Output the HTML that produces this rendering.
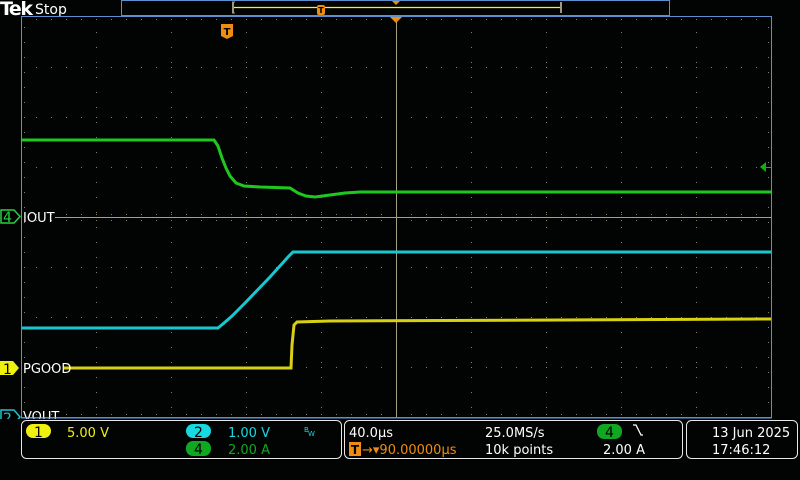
<!DOCTYPE html>
<html><head><meta charset="utf-8"><style>
html,body{margin:0;padding:0;background:#000;width:800px;height:480px;overflow:hidden}
svg{display:block}
text{font-family:"DejaVu Sans","Liberation Sans",sans-serif}
</style></head><body>
<svg width="800" height="480" viewBox="0 0 800 480" xmlns="http://www.w3.org/2000/svg">
<rect width="800" height="480" fill="#020403"/>
<text x="0" y="15" font-family="Liberation Serif,serif" font-weight="bold" font-size="19" fill="#fff" letter-spacing="-1.5">Tek</text>
<text x="35" y="14" font-size="14" fill="#fff">Stop</text>
<rect x="121.5" y="0.5" width="548" height="15" fill="none" stroke="#5b8fd0" stroke-width="1"/>
<line x1="233" y1="7.5" x2="561" y2="7.5" stroke="#ffef20" stroke-width="1.2"/>
<path d="M233 2v11M561 2v11" stroke="#a09880" stroke-width="2"/>
<path d="M232 2h3M232 13h3" stroke="#a09880"/>
<rect x="317" y="5" width="8" height="10" rx="2" fill="#f08c10"/>
<text x="321" y="13" font-size="8" fill="#000" text-anchor="middle" font-weight="bold">T</text>
<path d="M392 1h8l-4 4z" fill="#f08c10"/>
<g stroke="#8a8070" stroke-width="1" stroke-dasharray="1 14">
<line x1="96.5" y1="32" x2="96.5" y2="417"/><line x1="171.5" y1="32" x2="171.5" y2="417"/>
<line x1="246.5" y1="32" x2="246.5" y2="417"/><line x1="321.5" y1="32" x2="321.5" y2="417"/>
<line x1="471.5" y1="32" x2="471.5" y2="417"/><line x1="546.5" y1="32" x2="546.5" y2="417"/>
<line x1="621.5" y1="32" x2="621.5" y2="417"/><line x1="696.5" y1="32" x2="696.5" y2="417"/>
<line x1="36" y1="67.5" x2="771" y2="67.5"/><line x1="36" y1="117.5" x2="771" y2="117.5"/>
<line x1="36" y1="167.5" x2="771" y2="167.5"/><line x1="36" y1="267.5" x2="771" y2="267.5"/>
<line x1="36" y1="317.5" x2="771" y2="317.5"/><line x1="36" y1="367.5" x2="771" y2="367.5"/>
<line x1="36" y1="19.5" x2="771" y2="19.5"/><line x1="36" y1="414.5" x2="771" y2="414.5"/>
<line x1="24.5" y1="27" x2="24.5" y2="417"/><line x1="768.5" y1="27" x2="768.5" y2="417"/>
<line x1="36" y1="214.5" x2="771" y2="214.5"/><line x1="36" y1="220.5" x2="771" y2="220.5"/>
</g>
<line x1="55" y1="217.5" x2="771" y2="217.5" stroke="#a89e80" stroke-width="1"/>
<line x1="396.5" y1="17" x2="396.5" y2="417" stroke="#a89e80" stroke-width="1"/>
<path d="M21.5 17V418M21 16.5H771.5V418M21 417.5H772" fill="none" stroke="#5b8fd0" stroke-width="1"/>
<path d="M390 17h12l-6 6z" fill="#f08c10"/>
<path d="M221 24h12v12l-6 3l-6-3z" fill="#f08c10"/>
<text x="227" y="35" font-size="10" font-weight="bold" fill="#000" text-anchor="middle">T</text>
<path d="M760 167l6-5v10z" fill="#10b010"/><line x1="765" y1="167.5" x2="771" y2="167.5" stroke="#10b010"/>
<polyline fill="none" stroke="#1ec81e" stroke-width="3" points="22,140 214,140 218,146 222,158 226,168 230,176 236,183 244,186 260,187 290,188 298,193 306,196 315,197 330,195 345,193 360,192 771,192"/>
<polyline fill="none" stroke="#18c8d0" stroke-width="3" points="22,328 218,328 224,323 232,316 245,303 270,277 288,257 293,252 771,252"/>
<polyline fill="none" stroke="#d8d010" stroke-width="3" points="64,368 291,368 292,345 294,325 297,322 330,321 771,319"/>
<path d="M1 210h13l6 6.5l-6 6.5h-13z" fill="#000" stroke="#2ad040" stroke-width="1.5"/>
<text x="3" y="222" font-size="14" fill="#2ad040">4</text>
<text x="23" y="222" font-size="13" fill="#fff">IOUT</text>
<path d="M0 361h13l6 7l-6 7h-13z" fill="#f0f010"/>
<text x="3" y="374" font-size="14" fill="#000">1</text>
<text x="23" y="373" font-size="13" fill="#fff">PGOOD</text>
<path d="M1 410h13l6 7l-6 7h-13z" fill="#000" stroke="#18c8d0" stroke-width="1.5"/>
<text x="3" y="423" font-size="14" fill="#18c8d0">2</text>
<text x="23" y="421" font-size="13" fill="#fff">VOUT</text>
<rect x="0" y="419" width="800" height="61" fill="#020403"/>
<line x1="21" y1="418" x2="772" y2="418" stroke="#5b8fd0"/>
<rect x="21.5" y="420.5" width="320" height="38" rx="5" fill="none" stroke="#e8e8e8"/>
<rect x="344.5" y="420.5" width="338" height="38" rx="5" fill="none" stroke="#e8e8e8"/>
<rect x="686.5" y="420.5" width="111" height="38" rx="5" fill="none" stroke="#e8e8e8"/>
<rect x="26" y="424" width="25" height="14" rx="7" fill="#f0f010"/>
<text x="38.5" y="437" font-size="14" fill="#000" text-anchor="middle">1</text>
<text x="67" y="437" font-size="13" fill="#f0f010">5.00 V</text>
<rect x="186" y="424" width="25" height="14" rx="7" fill="#18d8e0"/>
<text x="198.5" y="437" font-size="14" fill="#000" text-anchor="middle">2</text>
<text x="228" y="437" font-size="13" fill="#18d8e0">1.00 V</text>
<text x="304" y="432" font-size="7" fill="#18d8e0">B</text><text x="308" y="436" font-size="7" fill="#18d8e0">W</text>
<rect x="186" y="441" width="25" height="15" rx="7" fill="#10a820"/>
<text x="198.5" y="454" font-size="14" fill="#000" text-anchor="middle">4</text>
<text x="228" y="454" font-size="13" fill="#10a820">2.00 A</text>
<text x="349" y="437" font-size="13" fill="#fff">40.0µs</text>
<rect x="349" y="442" width="12" height="14" fill="#f08c10"/>
<text x="355" y="454" font-size="12" font-weight="bold" fill="#000" text-anchor="middle">T</text>
<text x="362" y="454" font-size="13" fill="#f08c10">→▾90.00000µs</text>
<text x="485" y="437" font-size="13" fill="#fff">25.0MS/s</text>
<text x="485" y="454" font-size="13" fill="#fff">10k points</text>
<rect x="597" y="424" width="25" height="15" rx="7" fill="#10a820"/>
<text x="609.5" y="437" font-size="14" fill="#000" text-anchor="middle">4</text>
<path d="M633 425l3 0l5 10l2 0" fill="none" stroke="#fff" stroke-width="1.3"/>
<text x="603" y="454" font-size="13" fill="#fff">2.00 A</text>
<text x="712" y="437" font-size="13" fill="#fff">13 Jun  2025</text>
<text x="712" y="454" font-size="13" fill="#fff">17:46:12</text>
</svg>
</body></html>
